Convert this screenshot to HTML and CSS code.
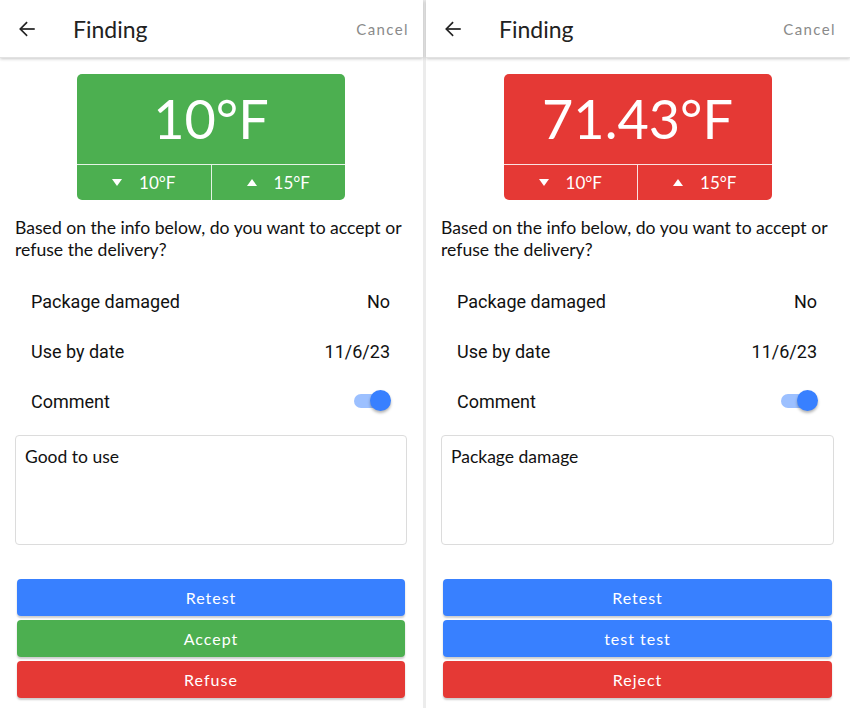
FILE: index.html
```html
<!DOCTYPE html>
<html lang="en">
<head>
    <meta charset="UTF-8">
    <meta name="viewport" content="width=device-width, initial-scale=1.0">
    <title>Finding</title>
    <link rel="stylesheet" href="styles.css">
</head>
<body>
    <div class="screens">
        <!-- accepted finding -->
        <section class="screen">
            <header class="toolbar">
                <svg class="back" viewBox="0 0 512 512" width="22" height="22">
                    <polyline points="244 400 100 256 244 112" fill="none" stroke="#222" stroke-width="40" stroke-linecap="square"/>
                    <line x1="120" y1="256" x2="416" y2="256" stroke="#222" stroke-width="40" stroke-linecap="square"/>
                </svg>
                <h1 class="title">Finding</h1>
                <span class="cancel">Cancel</span>
            </header>
            <div class="content">
                <div class="temp green">
                    <div class="temp-value">10°F</div>
                    <div class="temp-range">
                        <div class="range-cell"><span class="tri down"></span>10°F</div>
                        <div class="range-cell"><span class="tri up"></span>15°F</div>
                    </div>
                </div>
                <p class="question">Based on the info below, do you want to accept or refuse the delivery?</p>
                <div class="row"><span>Package damaged</span><span>No</span></div>
                <div class="row"><span>Use by date</span><span>11/6/23</span></div>
                <div class="row"><span>Comment</span><span class="toggle"><span class="knob"></span></span></div>
                <div class="comment">Good to use</div>
                <div class="actions">
                    <button class="btn blue">Retest</button>
                    <button class="btn green">Accept</button>
                    <button class="btn red">Refuse</button>
                </div>
            </div>
        </section>

        <div class="divider"></div>

        <!-- refused finding -->
        <section class="screen">
            <header class="toolbar">
                <svg class="back" viewBox="0 0 512 512" width="22" height="22">
                    <polyline points="244 400 100 256 244 112" fill="none" stroke="#222" stroke-width="40" stroke-linecap="square"/>
                    <line x1="120" y1="256" x2="416" y2="256" stroke="#222" stroke-width="40" stroke-linecap="square"/>
                </svg>
                <h1 class="title">Finding</h1>
                <span class="cancel">Cancel</span>
            </header>
            <div class="content">
                <div class="temp red">
                    <div class="temp-value">71.43°F</div>
                    <div class="temp-range">
                        <div class="range-cell"><span class="tri down"></span>10°F</div>
                        <div class="range-cell"><span class="tri up"></span>15°F</div>
                    </div>
                </div>
                <p class="question">Based on the info below, do you want to accept or refuse the delivery?</p>
                <div class="row"><span>Package damaged</span><span>No</span></div>
                <div class="row"><span>Use by date</span><span>11/6/23</span></div>
                <div class="row"><span>Comment</span><span class="toggle"><span class="knob"></span></span></div>
                <div class="comment">Package damage</div>
                <div class="actions">
                    <button class="btn blue">Retest</button>
                    <button class="btn blue">test test</button>
                    <button class="btn red">Reject</button>
                </div>
            </div>
        </section>
    </div>
</body>
</html>
```

FILE: styles.css
```css
body{
    margin: 0;
    padding: 0;
    background-color: white;
    color: #111;
    font-family: Lato, "Open Sans", sans-serif;
    overflow: hidden;
}

.screens{
    display: flex;
    width: 850px;
    height: 708px;
}

.screen{
    width: 423px;
    flex: none;
    display: flex;
    flex-direction: column;
}

.screen:last-child{
    width: 424px;
}

.divider{
    width: 3px;
    background-color: #ececec;
}

/* toolbar */
.toolbar{
    height: 58px;
    display: flex;
    align-items: center;
    padding: 0 14px 0 16px;
    box-shadow: 0 1px 3px rgba(0,0,0,0.22);
    border-bottom: 1px solid #e2e2e2;
    box-sizing: border-box;
    position: relative;
}

.back{
    flex: none;
}

.title{
    margin: 0 0 0 35px;
    font-size: 23px;
    font-weight: 400;
    color: #222;
    flex: 1;
}

.cancel{
    font-size: 15px;
    letter-spacing: 1.4px;
    color: #8a8a8a;
}

/* content */
.content{
    padding: 16px 16px 0 15px;
}

.temp{
    width: 268px;
    margin: 0 auto;
    border-radius: 5px;
    color: white;
    overflow: hidden;
}

.temp.green{ background-color: #4caf50; }
.temp.red{ background-color: #e53935; }

.temp-value{
    height: 90px;
    line-height: 90px;
    text-align: center;
    font-size: 54px;
    font-weight: 400;
    border-bottom: 1.5px solid rgba(255,255,255,0.85);
}

.temp-range{
    display: flex;
    height: 35px;
}

.range-cell{
    flex: 1;
    display: flex;
    align-items: center;
    justify-content: center;
    font-size: 17px;
}

.range-cell + .range-cell{
    border-left: 1.5px solid rgba(255,255,255,0.85);
}

.tri{
    width: 0;
    height: 0;
    border-left: 5px solid transparent;
    border-right: 5px solid transparent;
    margin-right: 17px;
}

.tri.down{ border-top: 7px solid white; }
.tri.up{ border-bottom: 7px solid white; }

.question{
    margin: 17px 0 15px 0;
    font-size: 17.6px;
    line-height: 22px;
}

.row{
    display: flex;
    justify-content: space-between;
    align-items: center;
    height: 50px;
    padding: 0 17px 0 16px;
    font-family: Roboto, sans-serif;
    font-size: 18px;
    color: #111;
}

.toggle{
    position: relative;
    width: 36px;
    height: 14px;
    border-radius: 7px;
    background-color: #9cc0ff;
}

.knob{
    position: absolute;
    right: -1px;
    top: -4px;
    width: 21px;
    height: 21px;
    border-radius: 50%;
    background-color: #3880ff;
    box-shadow: 0 2px 3px rgba(0,0,0,0.3);
}

.comment{
    margin-top: 9px;
    height: 110px;
    box-sizing: border-box;
    border: 1px solid #dcdcdc;
    border-radius: 4px;
    padding: 10px 9px;
    font-size: 17.5px;
    color: #111;
}

.actions{
    margin: 34px 2px 0 2px;
    display: flex;
    flex-direction: column;
    gap: 4px;
}

.btn{
    height: 37px;
    border: none;
    border-radius: 4px;
    color: white;
    font-family: Lato, sans-serif;
    font-size: 16px;
    letter-spacing: 1px;
    box-shadow: 0 2px 2px rgba(0,0,0,0.2);
}

.btn.blue{ background-color: #3880ff; }
.btn.green{ background-color: #4caf50; }
.btn.red{ background-color: #e53935; }
```
